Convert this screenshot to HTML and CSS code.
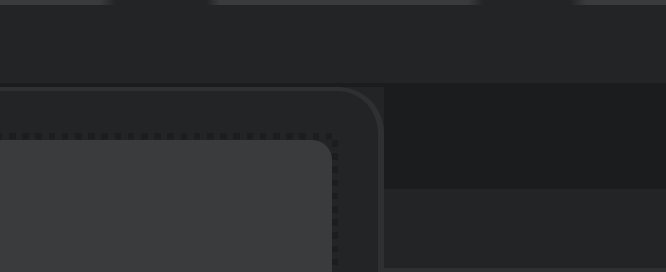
FILE: index.html
```html
<!DOCTYPE html>
<html lang="en">
<head>
    <meta charset="UTF-8">
    <meta name="viewport" content="width=device-width, initial-scale=1.0">
    <title>Panel</title>
    <link rel="stylesheet" href="styles.css">
</head>
<body>
    <div class="tab-strip"></div>
    <div class="header"></div>
    <div class="divider"></div>

    <div class="main">
        <div class="panel">
            <div class="focus-ring">
                <div class="card"></div>
            </div>
        </div>
        <div class="side">
            <div class="side-top"></div>
            <div class="side-bottom"></div>
        </div>
    </div>
</body>
</html>
```

FILE: styles.css
```css
* {
    margin: 0;
    padding: 0;
    box-sizing: border-box;
}
body {
    width: 666px;
    height: 272px;
    overflow: hidden;
    background-color: #232426;
    display: flex;
    flex-direction: column;
    font-family: "Liberation Sans", sans-serif;
}
.tab-strip {
    height: 5px;
    background: linear-gradient(to right,
        #3a3b3d 0 100px, #232426 116px 206px,
        #3a3b3d 220px 468px, #232426 484px 570px,
        #3a3b3d 586px);
}
.header {
    height: 78px;
    background-color: #232426;
}
.divider {
    height: 4px;
    background-color: #1b1c1e;
}
.main {
    flex: 1;
    display: flex;
}
.panel {
    width: 384px;
    background-color: #232426;
    border-top: 4px solid #2f3032;
    border-right: 6px solid #2f3032;
    border-top-right-radius: 46px;
    padding: 42px 40px 0 0;
    display: flex;
}
.focus-ring {
    flex: 1;
    display: flex;
    padding: 7px 6px 0 0;
    background:
        repeating-linear-gradient(to right,
            #1c1d1f 0 2.4px, transparent 2.4px 9px, #1c1d1f 9px 13.2px) left top / 100% 6.5px no-repeat,
        repeating-linear-gradient(to bottom,
            #1c1d1f 0 0.4px, transparent 0.4px 7px, #1c1d1f 7px 13.2px) right top / 6px 100% no-repeat;
}
.card {
    flex: 1;
    background-color: #3a3b3d;
    border-top-right-radius: 20px;
}
.side {
    flex: 1;
    display: flex;
    flex-direction: column;
}
.side-top {
    height: 102px;
    background-color: #1b1c1d;
}
.side-bottom {
    flex: 1;
    background-color: #232426;
    border-bottom: 4px solid #2f3032;
}
```
